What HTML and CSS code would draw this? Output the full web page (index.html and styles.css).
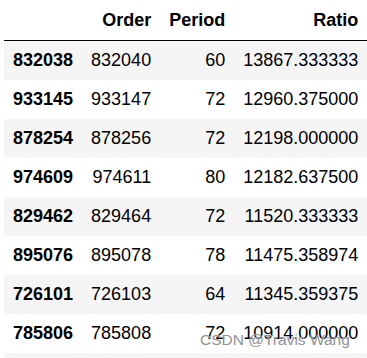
FILE: index.html
```html
<!DOCTYPE html>
<html>
<head>
<meta charset="utf-8">
<link rel="stylesheet" href="styles.css">
</head>
<body>
<div class="wrap">
<table class="df">
<thead>
<tr><th class="blank"></th><th>Order</th><th>Period</th><th>Ratio</th></tr>
</thead>
<tbody>
<tr><th>832038</th><td>832040</td><td>60</td><td>13867.333333</td></tr>
<tr><th>933145</th><td>933147</td><td>72</td><td>12960.375000</td></tr>
<tr><th>878254</th><td>878256</td><td>72</td><td>12198.000000</td></tr>
<tr><th>974609</th><td>974611</td><td>80</td><td>12182.637500</td></tr>
<tr><th>829462</th><td>829464</td><td>72</td><td>11520.333333</td></tr>
<tr><th>895076</th><td>895078</td><td>78</td><td>11475.358974</td></tr>
<tr><th>726101</th><td>726103</td><td>64</td><td>11345.359375</td></tr>
<tr><th>785806</th><td>785808</td><td>72</td><td>10914.000000</td></tr>
<tr><th>&nbsp;</th><td></td><td></td><td></td></tr>
</tbody>
</table>
<div class="watermark">CSDN @Travis Wang</div>
</div>
</body>
</html>
```
FILE: styles.css
```css
html, body {
  margin: 0;
  padding: 0;
  background: #ffffff;
}
.wrap {
  position: relative;
  padding-left: 4px;
  height: 358px;
  overflow: hidden;
}
.df {
  border-collapse: collapse;
  border-spacing: 0;
  font-family: "Liberation Sans", Arial, sans-serif;
  font-size: 18px;
  color: #000;
}
.df th, .df td {
  padding: 9px 9px;
  line-height: 21px;
  text-align: right;
  vertical-align: middle;
  white-space: nowrap;
}
.df thead th {
  font-weight: bold;
  padding-top: 10px;
  border-bottom: 1px solid #000;
}
.df tbody th {
  font-weight: bold;
  text-align: left;
}
.df tbody tr:nth-child(odd) {
  background: #f5f5f5;
}
.watermark {
  position: absolute;
  left: 200px;
  top: 331px;
  font-family: "Liberation Sans", Arial, sans-serif;
  font-size: 15.5px;
  line-height: normal;
  color: #929292;
  text-shadow: 0 0 1px rgba(255,255,255,0.7);
  white-space: nowrap;
}
```
